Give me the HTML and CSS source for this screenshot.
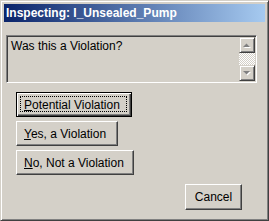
FILE: index.html
```html
<!DOCTYPE html>
<html lang="en">
    <head>
        <meta charset="UTF-8">
        <title>Inspecting: I_Unsealed_Pump</title>
        <link rel="stylesheet" href="styles.css">
    </head>
    <body>
        <div class="janela">
            <div class="titulo">Inspecting: I_Unsealed_Pump</div>

            <div class="caixa">
                <div class="caixa-texto">Was this a Violation?</div>
                <div class="rolagem">
                    <div class="seta-btn">
                        <svg width="14" height="14" viewBox="0 0 14 14">
                            <polygon points="3,9 10,9 6.5,5.5" fill="#ffffff" transform="translate(1,1)"/>
                            <polygon points="3,9 10,9 6.5,5.5" fill="#808080"/>
                        </svg>
                    </div>
                    <div class="trilho"></div>
                    <div class="seta-btn">
                        <svg width="14" height="14" viewBox="0 0 14 14">
                            <polygon points="3,5 10,5 6.5,8.5" fill="#ffffff" transform="translate(1,1)"/>
                            <polygon points="3,5 10,5 6.5,8.5" fill="#808080"/>
                        </svg>
                    </div>
                </div>
            </div>

            <div class="opcoes">
                <button class="botao padrao w-potencial"><u>P</u>otential Violation</button>
                <button class="botao w-sim"><u>Y</u>es, a Violation</button>
                <button class="botao w-nao"><u>N</u>o, Not a Violation</button>
            </div>

            <div class="rodape">
                <button class="botao cancelar">Cancel</button>
            </div>
        </div>
    </body>
</html>
```

FILE: styles.css
```css
body {
    margin: 0;
    padding: 0;
    background-color: #d4d0c8;
    font-family: "Liberation Sans", Arial, sans-serif;
    font-size: 12px;
    color: #000000;
}

.janela {
    box-sizing: border-box;
    width: 269px;
    height: 221px;
    padding: 3px;
    background-color: #d4d0c8;
    border: 1px solid;
    border-color: #d4d0c8 #404040 #404040 #d4d0c8;
    box-shadow: inset 1px 1px #ffffff, inset -1px -1px #808080;
    display: flex;
    flex-direction: column;
}

.titulo {
    height: 18px;
    line-height: 18px;
    padding-left: 2px;
    background: linear-gradient(to right, #0a246a, #a6caf0);
    color: #ffffff;
    font-weight: bold;
    font-size: 12px;
    white-space: nowrap;
}

.caixa {
    box-sizing: border-box;
    display: flex;
    width: 251px;
    height: 48px;
    margin: 13px 0 0 2px;
    border: 1px solid;
    border-color: #808080 #ffffff #ffffff #808080;
    box-shadow: inset 1px 1px #404040, inset -1px -1px #d4d0c8;
    padding: 1px;
}

.caixa-texto {
    flex: 1;
    padding: 2px 3px;
    line-height: 14px;
}

.rolagem {
    width: 16px;
    display: flex;
    flex-direction: column;
}

.seta-btn {
    box-sizing: border-box;
    width: 16px;
    height: 16px;
    border: 1px solid;
    border-color: #d4d0c8 #404040 #404040 #d4d0c8;
    box-shadow: inset 1px 1px #ffffff, inset -1px -1px #808080;
    display: flex;
    align-items: center;
    justify-content: center;
}

.trilho {
    flex: 1;
    background: repeating-conic-gradient(#ffffff 0 25%, #d4d0c8 0 50%) 0 0 / 2px 2px;
}

.opcoes {
    display: flex;
    flex-direction: column;
    align-items: flex-start;
    gap: 4px;
    margin: 9px 0 0 12px;
}

.botao {
    position: relative;
    box-sizing: border-box;
    height: 25px;
    margin: 0;
    padding: 0 0 0 7px;
    text-align: left;
    font-family: "Liberation Sans", Arial, sans-serif;
    font-size: 12px;
    color: #000000;
    background-color: #d4d0c8;
    border: 1px solid;
    border-color: #ffffff #404040 #404040 #ffffff;
    box-shadow: inset -1px -1px #808080;
}

.botao u {
    text-decoration-thickness: 1px;
    text-underline-offset: 1px;
}

.padrao {
    border: 1px solid #000000;
    box-shadow: inset 1px 1px #ffffff, inset -1px -1px #404040, inset -2px -2px #808080;
}

.padrao::after {
    content: "";
    position: absolute;
    top: 3px;
    left: 3px;
    right: 4px;
    bottom: 4px;
    border: 1px dotted #000000;
}

.w-potencial { width: 116px; }
.w-sim { width: 102px; }
.w-nao { width: 118px; }

.rodape {
    display: flex;
    justify-content: flex-end;
    margin: 9px 23px 0 0;
}

.cancelar {
    width: 57px;
    height: 26px;
    padding: 0;
    text-align: center;
}
```
